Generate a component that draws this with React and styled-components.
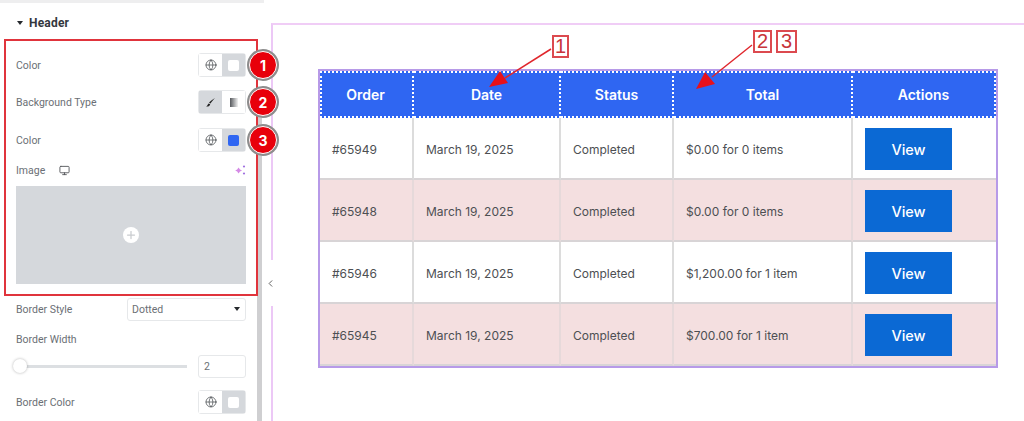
import React from 'react';
import styled, { createGlobalStyle } from 'styled-components';
import { Globe, Monitor, ChevronLeft, Plus } from 'lucide-react';

const GlobalStyle = createGlobalStyle`
  html, body { margin: 0; padding: 0; background: #fff; }
  body { font-family: "Roboto", "Liberation Sans", sans-serif; }
`;

const Page = styled.div`
  position: relative;
  display: flex;
  width: 1024px;
  height: 421px;
  overflow: hidden;
  background: #fff;
`;

const Sidebar = styled.aside`
  position: relative;
  flex: none;
  width: 264px;
  height: 421px;
  box-sizing: border-box;
  border-top: 3px solid #eeeeef;
  padding-left: 4px;
`;

const Scrollbar = styled.div`
  position: absolute;
  top: 102px;
  bottom: 0;
  left: 257px;
  width: 5px;
  background: #cfcfd1;
`;

const SectionTitle = styled.div`
  display: flex;
  align-items: center;
  gap: 6px;
  box-sizing: border-box;
  height: 36px;
  padding: 4px 0 0 13px;
  font-size: 12px;
  font-weight: 700;
  color: #33373d;
  letter-spacing: 0.2px;
`;

const Caret = styled.span`
  width: 0;
  height: 0;
  border-left: 3.5px solid transparent;
  border-right: 3.5px solid transparent;
  border-top: 4px solid #26292d;
`;

const Highlight = styled.div`
  position: relative;
  z-index: 1;
  box-sizing: border-box;
  width: 254px;
  height: 257px;
  padding: 12px 10px 0 10px;
  border: 2px solid #e0343c;
  background: #fff;
`;

const Row = styled.div`
  display: flex;
  align-items: center;
  justify-content: space-between;
  height: ${(p) => p.$h || 24}px;
  margin-bottom: ${(p) => p.$mb || 0}px;
  font-size: 10.5px;
  color: #6b6f75;
`;

const PlainRow = styled(Row)`
  margin-left: 12px;
  width: 230px;
`;

const Toggle = styled.div`
  position: relative;
  display: flex;
  width: 48px;
  height: 24px;
  box-sizing: border-box;
  border: 1px solid #e6e8ea;
  border-radius: 3px;
  background: #fff;
`;

const ToggleCell = styled.div`
  flex: 1;
  display: flex;
  align-items: center;
  justify-content: center;
  background: ${(p) => (p.$on ? '#d5d8dc' : '#fff')};
`;

const Swatch = styled.span`
  width: 11px;
  height: 11px;
  border-radius: 2px;
  background: ${(p) => p.$c};
`;

const Fade = styled.span`
  width: 8px;
  height: 9px;
  background: linear-gradient(90deg, #55585c, #f2f2f2);
`;

const Badge = styled.span`
  position: absolute;
  left: 50px;
  top: -3px;
  z-index: 3;
  box-sizing: border-box;
  width: 28px;
  height: 28px;
  display: flex;
  align-items: center;
  justify-content: center;
  border-radius: 50%;
  background: #e8000b;
  border: 1px solid #fff;
  box-shadow: 0 0 0 2px #8d8d8d;
  color: #fff;
  font-family: "Inter", "Liberation Sans", sans-serif;
  font-size: 14px;
  font-weight: 700;
`;

const ImageLabel = styled.span`
  display: flex;
  align-items: center;
  gap: 14px;
`;

const ImageBox = styled.div`
  display: flex;
  align-items: center;
  justify-content: center;
  height: 98px;
  background: #d5d8dc;
`;

const PlusDot = styled.span`
  width: 16px;
  height: 16px;
  border-radius: 50%;
  background: #fff;
  color: #c9cccf;
  display: flex;
  align-items: center;
  justify-content: center;
`;

const SelectBox = styled.div`
  display: flex;
  align-items: center;
  justify-content: space-between;
  box-sizing: border-box;
  width: 119px;
  height: 23px;
  padding: 0 5px 0 4px;
  border: 1px solid #e6e8ea;
  border-radius: 3px;
  font-size: 10.5px;
  color: #6b6f75;
`;

const SliderRow = styled(PlainRow)`
  gap: 11px;
`;

const Track = styled.div`
  position: relative;
  flex: 1;
  height: 3px;
  background: #dcdfe2;
`;

const Thumb = styled.span`
  position: absolute;
  left: -3px;
  top: -6px;
  width: 14px;
  height: 14px;
  border-radius: 50%;
  background: #fff;
  box-shadow: 0 0 3px rgba(0, 0, 0, 0.3);
`;

const NumberBox = styled.div`
  display: flex;
  align-items: center;
  box-sizing: border-box;
  width: 48px;
  height: 23px;
  padding-left: 5px;
  border: 1px solid #e6e8ea;
  border-radius: 3px;
  font-size: 10.5px;
  color: #6b6f75;
`;

const CollapseTab = styled.div`
  position: absolute;
  left: 264px;
  top: 260px;
  z-index: 2;
  width: 13px;
  height: 46px;
  display: flex;
  align-items: center;
  justify-content: center;
  background: #fff;
  color: #555;
`;

const Preview = styled.main`
  flex: none;
  width: 753px;
  height: 398px;
  margin: 23px 0 0 7px;
  padding: 44px 0 0 45px;
  box-sizing: border-box;
  border-top: 2px solid #f0cdf6;
  border-left: 2px solid #ecc8f6;
`;

const Table = styled.table`
  width: 680px;
  table-layout: fixed;
  border-collapse: separate;
  border-spacing: 0;
  border: 2px solid #b79ae8;
  font-family: "Inter", "Liberation Sans", sans-serif;
`;

const Th = styled.th`
  height: 43px;
  padding: 0 ${(p) => (p.$first ? 3 : 0)}px 0 0;
  background: #2f66f2;
  color: #fff;
  font-size: 14px;
  font-weight: 600;
  border: 2px dotted #fff;
  border-left-width: ${(p) => (p.$first ? 2 : 0)}px;
`;

const Td = styled.td`
  height: 58px;
  padding: 2px 0 0 12px;
  background: ${(p) => (p.$alt ? '#f4dfe0' : '#fff')};
  color: #4d4f53;
  font-size: 12px;
  border-right: 2px solid ${(p) => (p.$alt ? '#e6d9da' : '#dcdcdc')};
  border-bottom: 2px solid #d8d4d6;
  &:last-child { border-right: 0; }
`;

const ViewButton = styled.span`
  display: flex;
  align-items: center;
  justify-content: center;
  width: 87px;
  height: 42px;
  background: #0b69d4;
  color: #fff;
  font-size: 14.5px;
  font-weight: 500;
`;

const Callout = styled.span`
  position: absolute;
  z-index: 4;
  left: ${(p) => p.$x}px;
  top: ${(p) => p.$y}px;
  width: ${(p) => p.$w}px;
  height: 23px;
  box-sizing: border-box;
  display: flex;
  align-items: center;
  justify-content: center;
  border: 2px solid #dc4a4f;
  background: #fff;
  color: #c8343a;
  font-family: "Liberation Sans", sans-serif;
  font-size: 20px;
`;

const ArrowLayer = styled.svg`
  position: absolute;
  inset: 0;
  z-index: 3;
  pointer-events: none;
`;

const orders = [
  { id: '#65949', total: '$0.00 for 0 items' },
  { id: '#65948', total: '$0.00 for 0 items' },
  { id: '#65946', total: '$1,200.00 for 1 item' },
  { id: '#65945', total: '$700.00 for 1 item' },
];

const heads = ['Order', 'Date', 'Status', 'Total', 'Actions'];
const widths = [94, 147, 113, 179, 143];

const GlobeCell = () => (
  <ToggleCell>
    <Globe size={12} color="#4a4d52" strokeWidth={1.5} />
  </ToggleCell>
);

const BrushIcon = () => (
  <svg width="11" height="11" viewBox="0 0 11 11">
    <path d="M10 1 C8 3 6.5 5 5.5 6.5 L4 5.8 C4.8 4.8 7.5 2.5 10 1 Z" fill="#222" />
    <path d="M3.6 6.4 L5.2 7.2 C4.8 9 3 9.8 1 9.4 C2.4 8.8 2.6 7.4 3.6 6.4 Z" fill="#222" />
  </svg>
);

const SparkleIcon = () => (
  <svg width="11" height="10" viewBox="0 0 11 10">
    <path d="M3.5 2.5 L5 4.5 L7 5.5 L5 6.5 L3.5 8.5 L2.2 6.5 L0.2 5.5 L2.2 4.5 Z" fill="#d58ae6" />
    <circle cx="9" cy="1.5" r="1.1" fill="#a070e0" />
    <circle cx="9" cy="8.5" r="1.1" fill="#a070e0" />
  </svg>
);

const App = () => {
  return (
    <Page>
      <GlobalStyle />
      <Sidebar>
        <Scrollbar />
        <SectionTitle>
          <Caret />
          Header
        </SectionTitle>
        <Highlight>
          <Row $mb={13}>
            Color
            <Toggle>
              <GlobeCell />
              <ToggleCell $on><Swatch $c="#fff" /></ToggleCell>
              <Badge>1</Badge>
            </Toggle>
          </Row>
          <Row $mb={14}>
            Background Type
            <Toggle>
              <ToggleCell $on><BrushIcon /></ToggleCell>
              <ToggleCell><Fade /></ToggleCell>
              <Badge>2</Badge>
            </Toggle>
          </Row>
          <Row $mb={10}>
            Color
            <Toggle>
              <GlobeCell />
              <ToggleCell $on><Swatch $c="#2f66f2" /></ToggleCell>
              <Badge>3</Badge>
            </Toggle>
          </Row>
          <Row $h={16} $mb={8}>
            <ImageLabel>
              Image
              <Monitor size={11} color="#55585c" />
            </ImageLabel>
            <SparkleIcon />
          </Row>
          <ImageBox>
            <PlusDot><Plus size={12} strokeWidth={2.5} /></PlusDot>
          </ImageBox>
        </Highlight>
        <PlainRow $h={26} $mb={10}>
          Border Style
          <SelectBox>
            Dotted
            <Caret />
          </SelectBox>
        </PlainRow>
        <PlainRow $h={14} $mb={8}>Border Width</PlainRow>
        <SliderRow $h={24} $mb={12}>
          <Track><Thumb /></Track>
          <NumberBox>2</NumberBox>
        </SliderRow>
        <PlainRow>
          Border Color
          <Toggle>
            <GlobeCell />
            <ToggleCell $on><Swatch $c="#fff" /></ToggleCell>
          </Toggle>
        </PlainRow>
      </Sidebar>
      <CollapseTab><ChevronLeft size={11} strokeWidth={2} /></CollapseTab>
      <Preview>
        <Table>
          <colgroup>
            {widths.map((w, i) => <col key={i} style={{ width: w }} />)}
          </colgroup>
          <thead>
            <tr>
              {heads.map((h, i) => <Th key={h} $first={i === 0}>{h}</Th>)}
            </tr>
          </thead>
          <tbody>
            {orders.map((o, i) => (
              <tr key={o.id}>
                <Td $alt={i % 2 === 1}>{o.id}</Td>
                <Td $alt={i % 2 === 1}>March 19, 2025</Td>
                <Td $alt={i % 2 === 1}>Completed</Td>
                <Td $alt={i % 2 === 1}>{o.total}</Td>
                <Td $alt={i % 2 === 1}><ViewButton>View</ViewButton></Td>
              </tr>
            ))}
          </tbody>
        </Table>
      </Preview>
      <ArrowLayer width="1024" height="421" viewBox="0 0 1024 421">
        <line x1="551" y1="49" x2="505" y2="78" stroke="#e0262c" strokeWidth="1.5" />
        <polygon points="489,87 500,71 508,83" fill="#e8101a" />
        <line x1="752" y1="45" x2="712" y2="77" stroke="#e0262c" strokeWidth="1.5" />
        <polygon points="696,89 705,72 715,84" fill="#e8101a" />
      </ArrowLayer>
      <Callout $x={552} $y={35} $w={17}>1</Callout>
      <Callout $x={753} $y={30} $w={19}>2</Callout>
      <Callout $x={776} $y={30} $w={21}>3</Callout>
    </Page>
  );
};

export default App;
